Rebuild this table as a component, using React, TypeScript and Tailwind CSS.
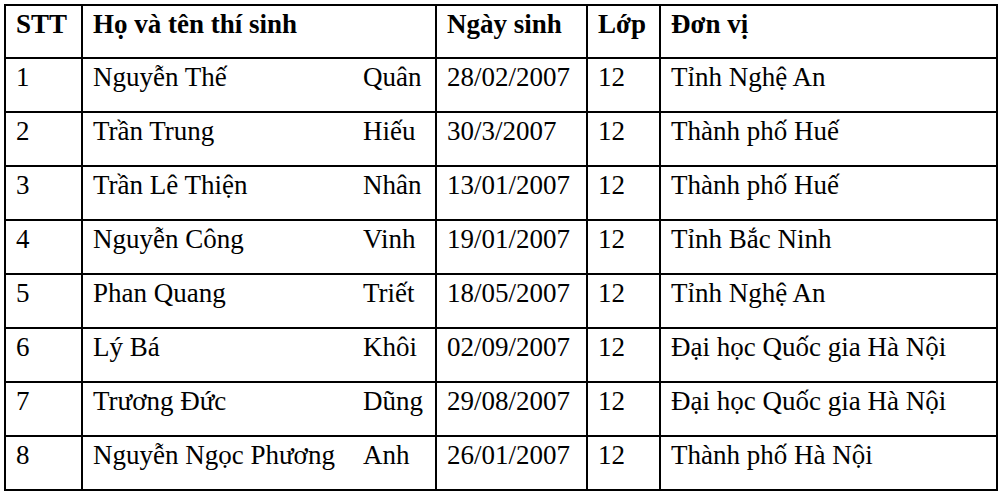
const rows = [
  { stt: "1", ho: "Nguyễn Thế", ten: "Quân", ngay: "28/02/2007", lop: "12", donvi: "Tỉnh Nghệ An" },
  { stt: "2", ho: "Trần Trung", ten: "Hiếu", ngay: "30/3/2007", lop: "12", donvi: "Thành phố Huế" },
  { stt: "3", ho: "Trần Lê Thiện", ten: "Nhân", ngay: "13/01/2007", lop: "12", donvi: "Thành phố Huế" },
  { stt: "4", ho: "Nguyễn Công", ten: "Vinh", ngay: "19/01/2007", lop: "12", donvi: "Tỉnh Bắc Ninh" },
  { stt: "5", ho: "Phan Quang", ten: "Triết", ngay: "18/05/2007", lop: "12", donvi: "Tỉnh Nghệ An" },
  { stt: "6", ho: "Lý Bá", ten: "Khôi", ngay: "02/09/2007", lop: "12", donvi: "Đại học Quốc gia Hà Nội" },
  { stt: "7", ho: "Trương Đức", ten: "Dũng", ngay: "29/08/2007", lop: "12", donvi: "Đại học Quốc gia Hà Nội" },
  { stt: "8", ho: "Nguyễn Ngọc Phương", ten: "Anh", ngay: "26/01/2007", lop: "12", donvi: "Thành phố Hà Nội" },
];

const serif = "font-['Liberation_Serif','Times_New_Roman',serif] text-[27px] leading-[32px] text-black";
const cell = `${serif} border-2 border-black pl-[10px] pr-0 pt-[2px] align-top text-left`;

export default function App() {
  return (
    <div className={`min-h-screen bg-white pt-[4px] pl-[4px] ${serif}`}>
      <table className={`border-collapse table-fixed w-[992px] ${serif}`}>
        <colgroup>
          <col className="w-[77px]" />
          <col className="w-[354px]" />
          <col className="w-[151px]" />
          <col className="w-[73px]" />
          <col className="w-[337px]" />
        </colgroup>
        <thead>
          <tr className="h-[53px]">
            <th className={`${cell} font-bold`}>STT</th>
            <th className={`${cell} font-bold`}>Họ và tên thí sinh</th>
            <th className={`${cell} font-bold`}>Ngày sinh</th>
            <th className={`${cell} font-bold`}>Lớp</th>
            <th className={`${cell} font-bold`}>Đơn vị</th>
          </tr>
        </thead>
        <tbody>
          {rows.map((r) => (
            <tr key={r.stt} className="h-[54px]">
              <td className={`${cell} font-normal`}>{r.stt}</td>
              <td className={`${cell} font-normal`}>
                <div className="flex">
                  <span className="w-[270px] shrink-0 whitespace-nowrap">{r.ho}</span>
                  <span className="whitespace-nowrap">{r.ten}</span>
                </div>
              </td>
              <td className={`${cell} font-normal`}>{r.ngay}</td>
              <td className={`${cell} font-normal`}>{r.lop}</td>
              <td className={`${cell} font-normal whitespace-nowrap`}>{r.donvi}</td>
            </tr>
          ))}
        </tbody>
      </table>
    </div>
  );
}
